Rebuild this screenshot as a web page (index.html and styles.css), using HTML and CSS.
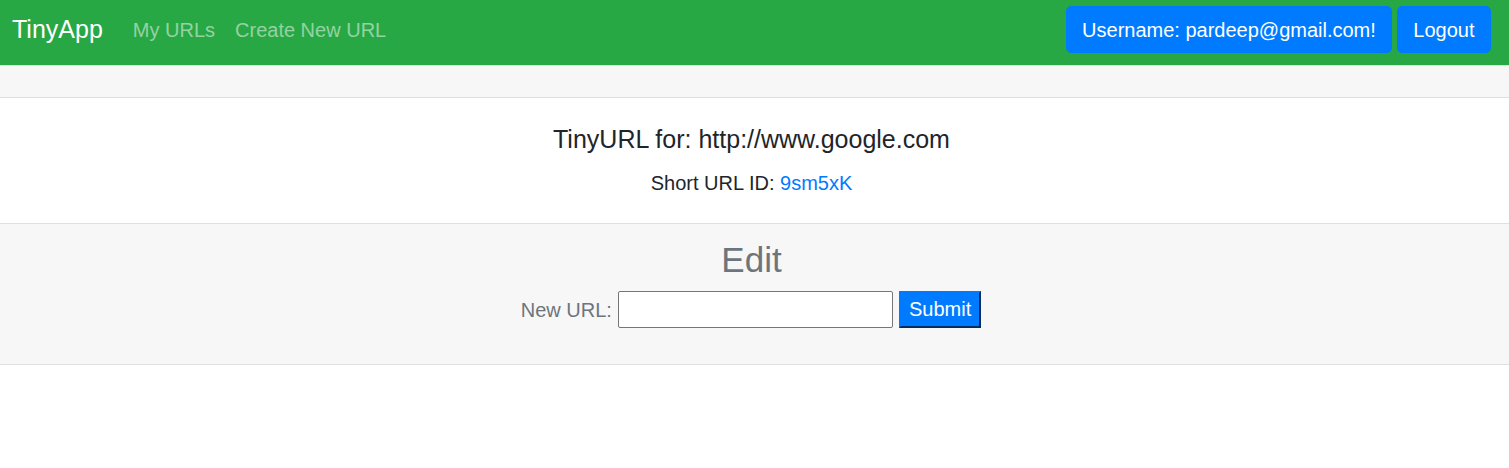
FILE: index.html
```html
<!DOCTYPE html>
<html lang="en">
<head>
<meta charset="utf-8">
<title>TinyApp</title>
<link rel="stylesheet" href="styles.css">
</head>
<body>
<nav class="navbar">
  <a class="brand" href="#">TinyApp</a>
  <div class="nav-links">
    <a class="nav-link" href="#">My URLs</a>
    <a class="nav-link" href="#">Create New URL</a>
  </div>
  <div class="nav-right">
    <button class="btn btn-primary" type="button">Username: pardeep@gmail.com!</button>
    <button class="btn btn-primary btn-logout" type="button">Logout</button>
  </div>
</nav>
<div class="card">
  <div class="card-header"></div>
  <div class="card-body">
    <h5 class="card-title">TinyURL for: http://www.google.com</h5>
    <p class="card-text">Short URL ID: <a class="link" href="#">9sm5xK</a></p>
  </div>
  <div class="card-footer">
    <h2 class="edit-title">Edit</h2>
    <form class="edit-form">
      <label class="edit-label" for="newurl">New URL:</label>
      <input class="edit-input" id="newurl" type="text">
      <input class="edit-submit" type="submit" value="Submit">
    </form>
  </div>
</div>
</body>
</html>
```
FILE: styles.css
```css
* { box-sizing: border-box; }
html, body { margin: 0; padding: 0; }
body {
  font-family: "Liberation Sans", Arial, sans-serif;
  font-size: 20px;
  line-height: 1.5;
  color: #212529;
  background: #fff;
}
.navbar {
  display: flex;
  align-items: flex-start;
  height: 65px;
  padding: 6px 18px 0 12px;
  background: #28a745;
}
.brand {
  font-size: 25px;
  line-height: 36px;
  margin-top: 5px;
  margin-right: 20px;
  color: #fff;
  text-decoration: none;
}
.nav-links { display: flex; margin-top: 9px; }
.nav-link {
  padding: 0 10px;
  font-size: 20px;
  line-height: 30px;
  color: rgba(255,255,255,.5);
  text-decoration: none;
}
.nav-right { margin-left: auto; display: flex; gap: 5px; }
.btn {
  font-family: inherit;
  font-size: 20px;
  line-height: 30px;
  padding: 7.5px 15px;
  border: 1px solid #007bff;
  border-radius: 5px;
  cursor: pointer;
}
.btn-logout { padding: 7.5px 15.5px; }
.btn-primary { background: #007bff; color: #fff; }
.card {
  border-top: 1px solid #dfdfdf;
  border-bottom: 1px solid #dfdfdf;
}
.card-header {
  height: 32px;
  background: #f7f7f7;
  border-bottom: 1px solid #dfdfdf;
}
.card-body {
  height: 125px;
  text-align: center;
  padding: 26px 6px 0 0;
}
.card-title {
  margin: 0;
  font-size: 25px;
  font-weight: 400;
  line-height: 1.2;
}
.card-text { margin: 17px 0 0; font-size: 20px; line-height: 1.2; }
.link { color: #007bff; text-decoration: none; }
.card-footer {
  height: 141px;
  background: #f7f7f7;
  border-top: 1px solid #dfdfdf;
  text-align: center;
  color: #6c757d;
  padding: 15px 6px 0 0;
}
.edit-title {
  margin: 0;
  font-size: 35px;
  font-weight: 400;
  line-height: 1.2;
}
.edit-form {
  display: flex;
  justify-content: center;
  align-items: center;
  gap: 6px;
  margin-top: 10px;
  padding-right: 1px;
}
.edit-label { font-size: 20px; color: #6c757d; }
.edit-input {
  width: 275px;
  height: 37px;
  border: 1px solid #767676;
  border-radius: 2px;
  background: #fff;
  font-family: inherit;
  font-size: 20px;
}
.edit-submit {
  height: 37px;
  padding: 0 8px;
  font-family: inherit;
  font-size: 20px;
  color: #fff;
  background: #007bff;
  border: 2px outset #007bff;
  border-bottom-color: #0056b3;
  border-right-color: #0056b3;
}
```
